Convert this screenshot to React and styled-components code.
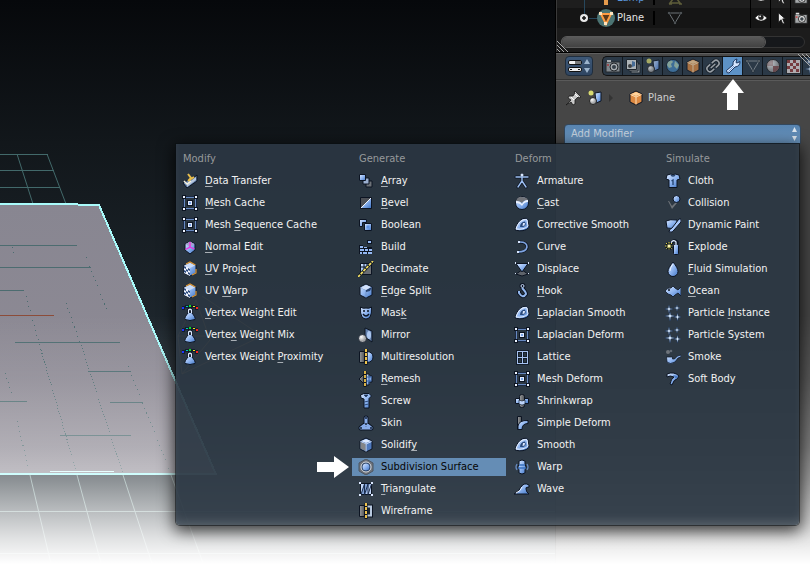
import React from 'react';
import styled, { createGlobalStyle, css } from 'styled-components';

const GlobalStyle = createGlobalStyle`
  *, *::before, *::after { box-sizing: border-box; }
  html, body { margin: 0; height: 100%; background: #fff; overflow: hidden; }
  body, button { font: 11px/14px "DejaVu Sans Condensed", "DejaVu Sans", sans-serif; }
  button { border: 0; padding: 0; margin: 0; background: none; color: inherit; text-align: left; }
  ul { list-style: none; margin: 0; padding: 0; }
  svg { display: block; flex: none; }
`;

/* ---------- layout ---------- */

const Shell = styled.div`
  position: relative;
  display: grid;
  grid-template-columns: 1fr 255px;
  min-height: 100vh;
  overflow: hidden;
  &::after {
    content: "";
    position: absolute;
    inset: 0;
    z-index: 1;
    pointer-events: none;
    background: linear-gradient(rgba(255,255,255,0) 55%, rgba(255,255,255,.1) 66%, rgba(255,255,255,.3) 78%, rgba(255,255,255,.48) 84%, rgba(255,255,255,.86) 94%, #fff 98.5%);
  }
`;
const Viewport = styled.main`
  overflow: hidden;
  background: linear-gradient(#06080b, #12171b 25%, #1e272e 60%, #2c363d 100%);
`;
const Side = styled.aside`
  display: flex;
  flex-direction: column;
  min-width: 0;
  border-left: 1px solid #000;
  background: #464646;
  color: #e6e6e6;
`;
const Outliner = styled.section`
  position: relative;
  display: flex;
  flex-direction: column;
  justify-content: flex-end;
  height: 52px;
  overflow: hidden;
  padding-bottom: 4px;
  background: #1c1c1c;
  border-left: 1px solid #3a3a3a;
`;
const OutlinerRow = styled.li`
  display: flex;
  align-items: center;
  height: 20px;
  padding-left: 21px;
  background: ${p => (p.$odd ? '#151515' : '#1e1e1e')};
  color: ${p => (p.$linked ? '#5a96dc' : '#e4e4e4')};
`;
const RowName = styled.span`
  width: 38px;
  margin-left: 1px;
  border-right: 2px solid #000;
`;
const RowData = styled.span`
  margin-left: 12px;
  flex: 1;
  opacity: .7;
`;
const Toggle = styled.button`
  display: grid;
  place-items: center;
  width: 20px;
  height: 20px;
  border-left: 1px solid #000;
`;
const ScrollTrack = styled.div`
  height: 12px;
  margin: 8px 5px 0 4px;
  border: 1px solid #333;
  border-radius: 6px;
  background: #16181b;
`;
const ScrollThumb = styled.div`
  width: 84%;
  height: 10px;
  border-radius: 5px;
  background: linear-gradient(#5a5a5a, #424242);
  box-shadow: 0 0 0 1px #5c5c5c;
`;
const Header = styled.header`
  display: flex;
  align-items: center;
  height: 28px;
  padding-left: 9px;
  border-top: 1px solid #000;
  border-bottom: 1px solid #333;
  box-shadow: inset 0 1px #606060, 0 1px #5a5a5a;
  background: #484848;
  position: relative;
  overflow: visible;
`;
const EditorButton = styled.button`
  display: grid;
  place-items: center;
  width: 28px;
  height: 20px;
  margin-right: 9px;
  border: 1px solid #1f2d3d;
  border-radius: 4px;
  background: linear-gradient(#3d5878, #2f4561);
`;
const Tabs = styled.nav`
  display: flex;
  flex: 1;
  min-width: 0;
  border: 1px solid #111;
  border-right: 0;
  border-radius: 5px 0 0 5px;
  background: #2b3947;
`;
const Tab = styled.button`
  position: relative;
  display: grid;
  place-items: center;
  flex: 0 0 20px;
  height: 18px;
  border-right: 1px solid #121920;
  background: ${p => (p.$active ? '#5d92c6' : 'transparent')};
  > svg:first-child { opacity: ${p => (p.$active ? 1 : 0.7)}; }
`;
const UpArrow = styled.svg`
  position: absolute;
  top: 22px;
  left: -1px;
`;
const Grip = styled.svg`
  position: absolute;
  ${p => (p.$corner === 'top' ? css`top: 1px; right: 0;` : css`bottom: 0; left: 0;`)}
`;
const Crumbs = styled.div`
  display: flex;
  align-items: center;
  height: 36px;
  padding-left: 9px;
  color: #cfcfcf;
`;
const CrumbName = styled.span`
  margin-left: 4px;
`;
const Gap = styled.span`
  width: ${p => p.$w}px;
`;
const MenuAnchor = styled.div`
  position: relative;
  margin: 8px 9px 0 8px;
`;
const AddButton = styled.button`
  display: flex;
  align-items: center;
  justify-content: space-between;
  width: 100%;
  height: 20px;
  padding: 0 2px 0 6px;
  border: 1px solid #33485e;
  border-radius: 4px 4px 0 0;
  background: linear-gradient(#5884b0, #6b96c0);
  color: #c6d3df;
`;

/* ---------- menu ---------- */

const Menu = styled.div`
  position: absolute;
  top: 100%;
  right: 2px;
  z-index: 2;
  display: grid;
  grid-template-columns: 176px 156px 151px 140px;
  padding: 6px 0 5px;
  border-radius: 0 0 4px 4px;
  background: rgba(43, 55, 67, .93);
  color: #f2f2f2;
  box-shadow: 0 0 0 1px rgba(10,14,18,.55), 0 4px 16px 2px rgba(0,0,0,.75), inset 0 -8px 12px -6px rgba(255,255,255,.2);
`;
const Column = styled.ul`
  display: flex;
  flex-direction: column;
  gap: 4px;
  padding-right: 2px;
`;
const Heading = styled.li`
  height: 18px;
  padding-left: 7px;
  line-height: 18px;
  color: #96999b;
`;
const Item = styled.button`
  position: relative;
  display: flex;
  align-items: center;
  gap: 7px;
  width: 100%;
  height: 18px;
  padding-left: 6px;
  white-space: nowrap;
  background: ${p => (p.$active ? '#658db5' : 'transparent')};
  color: ${p => (p.$active ? '#050505' : 'inherit')};
`;
const Key = styled.span`
  text-decoration: underline 1px #a9afb5;
  text-underline-offset: 2px;
`;
const SideArrow = styled.svg`
  position: absolute;
  right: 100%;
  top: -2px;
  margin-right: 3px;
`;

/* ---------- icons ---------- */

const O = '#0c1422';
const B = 'url(#blue)';
const G = 'url(#grey)';

const Defs = styled.svg`
  position: absolute;
`;

const cageIcon = (
  <g shapeRendering="crispEdges">
    <path d="M2 2h12v12H2z" fill="none" stroke="#1b2a44" strokeWidth="2" />
    <path d="M2.500 2.500h11v11h-11z" fill="none" stroke="#6688c0" />
    {[[1, 1], [13, 1], [1, 13], [13, 13]].map(([x, y]) => (
      <g key={`${x}-${y}`}><rect x={x - 1} y={y - 1} width="4" height="4" fill={O} /><rect x={x} y={y} width="2" height="2" fill="#eef4ff" /></g>
    ))}
    <rect x="5" y="5" width="6" height="6" fill={O} /><rect x="6" y="6" width="4" height="4" fill="#dfeaff" /><rect x="7" y="7" width="2" height="2" fill="#7aa5e8" />
  </g>
);
const uvIcon = (
  <g>
    <path d="M2 4 8 1l6 3v8l-6 3-6-3z" fill={B} stroke={O} />
    <path d="M2.500 4.500 8 2l5 2.500L8 7z" fill="#c9dcfa" />
    <path d="M2 4.500 8 7v8l-6-3z" fill="#f0f4fd" />
    <path d="M2 5l2 1v2L2 7zM4 8l2 1v2l-2-1zM6 7l2 1v2L6 9zM2 9l2 1v2l-2-1zM6 11l2 1v2l-2-1z" fill="#2b4a7e" />
    <path d="M4 3l4-2 5.500 3M10 14l4-2V8" stroke="#e09a38" strokeWidth="1.200" fill="none" />
  </g>
);
const weightIcon = (
  <g>
    <g shapeRendering="crispEdges">
      <path d="M0 1h3V0h10v1h3v4h-3V3H3v2H0z" fill={O} opacity=".7" />
      <rect x="0" y="2" width="2" height="2" fill="#1f35ff" /><rect x="4" y="1" width="2" height="1" fill="#00c5c8" /><rect x="7" y="0" width="2" height="2" fill="#0cdf25" /><rect x="11" y="1" width="2" height="1" fill="#f0e221" /><rect x="14" y="2" width="2" height="2" fill="#f8251d" />
    </g>
    <path d="M6.500 8V5q1.500-2 3 0v3" fill="none" stroke={O} strokeWidth="3" />
    <path d="M6.500 7.500h3q4.500 5 3.500 7-5 2-10 0-1-2 3.500-7z" fill={B} stroke={O} />
    <path d="M6.500 8V5q1.500-1.500 3 0v3" fill="none" stroke="#dbe7fb" strokeWidth="1.200" />
  </g>
);
const smoothIcon = (
  <g>
    <path d="M1 13Q3 4 9 1.500q4-1 5 1l1 8Q10 15.500 1 13z" fill={B} stroke={O} />
    <path d="M2 12q2-7 7-9 3-1 4 0l1 6q-4 4-12 3z" fill="none" stroke="#eaf2ff" />
    <path d="M6 10Q6 5 11 4.500 13 9 9 10z" fill="#2a4a7c" /><path d="M9 6l2 0-.5 2.500-2 .5z" fill="#dce8ff" />
  </g>
);
const sparkIcon = (
  <g stroke="#17305a" strokeWidth=".5">
    <path d="M4 0l.8 3.200L8 4l-3.200.8L4 8l-.8-3.200L0 4l3.200-.8zM12 0l.7 2.300L15 3l-2.300.7L12 6l-.7-2.300L9 3l2.300-.7zM5 7l.9 3.100L10 11l-4.100.9L5 16l-.9-4.100L0 11l4.100-.9zM12.500 8l.8 3.200 2.700.8-2.700.8-.8 3.200-.8-3.200L9 12l2.700-.8z" fill="#dceeff" />
  </g>
);
const cube = (fill, lines) => (
  <g><path d="M2 4 8 1l6 3v8l-6 3-6-3z" fill={fill} stroke={O} /><path d="M2.500 4.500 8 7l5.500-2.500M8 7v7.500" fill="none" stroke={lines} /></g>
);

const icons = {
  transfer: <g><path d="M1 10 5 15 15 8V2l-5 4-4 1z" fill="#6785ae" stroke={O} /><path d="M5 14l9-7V4l-9 7z" fill="#b7c8e0" /><path d="M2 8l3 3 4-3" fill="none" stroke="#f6f2df" strokeWidth="1.500" /><path d="M6 1l3 4-3 3M6 8 12 4" fill="none" stroke="#e7bd4c" strokeWidth="2" /></g>,
  cage: cageIcon,
  normal: <g><path d="M3 5 8 2l5 3v6l-5 4-5-4z" fill={B} stroke={O} /><path d="M3.500 5 8 2.500 12.500 5 8 8z" fill="#a79fd0" /><path d="M8 3v5l-4.500 2.500M8 8l4.500 2" fill="none" stroke="#f02de0" strokeWidth="1.300" /></g>,
  uv: uvIcon,
  weight: weightIcon,
  array: <g stroke={O}><path d="M8 8h6v6H8z" fill="#6d7278" /><path d="M5 5h6v6H5z" fill="#9bb0d0" /><path d="M1.500 1.500h6v6h-6z" fill={B} /></g>,
  bevel: <g><path d="M2.500 2.500h11v11h-11z" fill="#4c4f55" stroke={O} /><path d="M3 13 13 3v10z" fill={B} /><path d="M3 13 13 3" stroke="#eef5ff" /></g>,
  boolean: <g stroke={O}><path d="M1.500 2.500h7v3h-4v4h-3z" fill={B} /><path d="M6.500 6.500h7v7h-7z" fill={B} /><path d="M8.500 8.500h3v3h-3z" fill="#5f92df" stroke="none" /></g>,
  build: <g shapeRendering="crispEdges"><path d="M1 6h4v2h9v7H1zM9 1h5v4H9z" fill={O} /><path d="M10 2h3v2h-3zM2 7h3v2H2zM2 10h4v2H2zM7 10h3v2H7zM11 10h3v2h-3zM6 8h3v1H6zM2 13h2v2H2zM5 13h4v2H5zM10 13h4v2h-4z" fill="#94b8f2" /></g>,
  decimate: <g><path d="M2.500 2.500h11v11h-11z" fill="#6a6e74" stroke={O} /><path d="M3 3h9L3 13z" fill={B} /><path d="M6 3v8M3 6h8M9 3v4" stroke={O} /><path d="M0 16 15 0" stroke={O} strokeWidth="3" /><path d="M0 16 15 0" stroke="#f0dc62" strokeWidth="1.800" strokeDasharray="3 1" /></g>,
  edge: <g>{cube(B, '#7094cc')}<path d="M8 7l6-3-2 4-4 1z" fill="#27426e" /><path d="M3 5l5-3 5 2-5 3z" fill="#d2e1fb" /></g>,
  mask: <g><path d="M2.500 2q2.500 2 5.500 1 3 1 5.500-1 .5 7-1.500 10-4 4-8 0-2-3-1.500-10z" fill={B} stroke={O} /><path d="M5 6h2M9 6h2" stroke={O} strokeWidth="1.500" /><path d="M5 9q3 4 6 0" stroke={O} fill="none" strokeWidth="1.300" /></g>,
  mirror: <g><path d="M7 1l7 3v11l-7-5z" fill="#6380ac" stroke={O} /><ellipse cx="11" cy="8" rx="2" ry="4" fill="#adc8f0" /><circle cx="4.500" cy="11.500" r="4" fill="url(#white)" stroke={O} strokeWidth=".7" /></g>,
  multires: <g><path d="M1.500 2.500h5v11h-5z" fill={G} stroke={O} /><path d="M9 2.500Q15 3 15 8t-6 5.500z" fill={B} stroke={O} /><path d="M8 0v16" stroke={O} strokeWidth="3" /><path d="M8 0v16" stroke="#eec34c" strokeWidth="2" strokeDasharray="3 1" /></g>,
  remesh: <g><path d="M1 8l5-5v10z" fill={G} stroke={O} /><path d="M8 3h3v2h3v6h-3v3H8z" fill={B} stroke={O} /><path d="M8 6h6M8 10h5M11 4v9" stroke="#345f9e" /><path d="M7 0v16" stroke={O} strokeWidth="3" /><path d="M7 0v16" stroke="#eec34c" strokeWidth="1.800" strokeDasharray="3 1" /></g>,
  screw: <g><path d="M2.500 2 6 .5h5L13.500 3 11 5.500V15H6V6L3 5z" fill={B} stroke={O} /><path d="M6 2h4L8 4zM6 9l5-1M6 12l5-1" stroke="#304d7b" fill={O} /></g>,
  skin: <g fill="none" strokeLinecap="round"><path d="M8 3v6l-5 4M8 9l5 4M3 13h10" stroke={O} strokeWidth="5" /><path d="M8 3v6l-5 4M8 9l5 4M3 13h10" stroke="#87aceb" strokeWidth="3" /><g fill="#14233b"><circle cx="8" cy="3" r="1" /><circle cx="8" cy="9" r="1" /><circle cx="3" cy="13" r="1" /><circle cx="13" cy="13" r="1" /></g></g>,
  solidify: <g>{cube('#4e79bd', '#cfdff8')}<path d="M2.500 5 7.500 7v7l-5-2.500z" fill="#838588" /><path d="M3 4l5-2 5 2-5 2z" fill="#dce9ff" /></g>,
  subsurf: <g><path d="M8 0 15 4v8l-7 4-7-4V4z" fill="#70747b" stroke="#4b5663" /><circle cx="8" cy="8" r="5" fill="#1b3458" stroke="#e0e4e7" /><circle cx="8" cy="8" r="3.500" fill={B} /></g>,
  triangulate: <g><path d="M2.500 2.500h11v11h-11z" fill="#7e9ed2" stroke={O} /><path d="M3 13V3h3zM8 13l4-10h1v10z" fill="#c3d7f8" /><path d="M3 13.500 6.500 3v10.500L10 3v10.500L13.500 3" fill="none" stroke="#1c2f50" /><path d="M1 2h2M13 2h2M1 14h2M13 14h2" stroke="#dce8ff" strokeWidth="2" /></g>,
  wireframe: <g><path d="M1.500 2.500h5v11h-5z" fill={G} stroke={O} /><path d="M8 3.500h5v9H8" fill="#17202b" stroke={O} strokeWidth="4" /><path d="M8 3.500h5v9H8" fill="#1b2530" stroke="#b8c9df" strokeWidth="2" /><path d="M8 0v16" stroke={O} strokeWidth="3" /><path d="M8 0v16" stroke="#eec34c" strokeWidth="2" strokeDasharray="3 1" /></g>,
  armature: <g fill="none" strokeLinecap="round"><path d="M2 4h12M8 2v6l-4 6M8 8l4 6" stroke={O} strokeWidth="3" /><path d="M2 4h12M8 4v4l-4 6M8 8l4 6" stroke="#9cbff2" strokeWidth="1.400" /><circle cx="8" cy="2" r="1.500" fill="#d8e7ff" /></g>,
  cast: <g><circle cx="8" cy="8" r="6.500" fill={B} stroke={O} /><path d="M2 6Q4 1 8 2q5 0 6 3-4 0-6 3-2-2-6-2z" fill="#707379" /><path d="M2 6q4 0 6 3 2-4 6-4v2q-4 0-6 4-2-3-6-3z" fill="#eaf2ff" /></g>,
  smooth: smoothIcon,
  curve: <g fill="none"><path d="M5 3q9 0 8 6-1 4-9 4" stroke={O} strokeWidth="3" /><path d="M6 3q7 0 7 5-1 5-9 5" stroke="#7fa5e2" strokeWidth="1.600" /><path d="M4 2h2v2H4zM3 12h2v2H3z" fill="#d8e6ff" /></g>,
  displace: <g><path d="M2 13 8 9l6 4-6 2z" fill="#5f646b" stroke={O} /><path d="M2 2.500h12L8 11z" fill={B} stroke={O} /><path d="M1 1h1v2H1zM14 1h1v2h-1zM1 12h1v1H1zM14 12h1v1h-1z" fill="#d6e3fa" /></g>,
  hook: <g fill="none"><circle cx="8.500" cy="3" r="1.500" stroke={O} strokeWidth="3" /><path d="M8 5q4 4 4 6-3 5-7-1V8" stroke={O} strokeWidth="4" /><circle cx="8.500" cy="3" r="1.500" stroke="#c8daf8" /><path d="M8 5q4 4 4 6-3 5-7-1V8" stroke="#93b7ee" strokeWidth="2" /></g>,
  lattice: <g shapeRendering="crispEdges" fill="none"><path d="M3.500 2.500h10v12h-10zM8.500 2v12M3 8.500h10" stroke={O} strokeWidth="3" opacity=".7" /><path d="M3.500 2.500h10v12h-10zM8.500 2v12M3 8.500h10" stroke="#a6c2f0" /></g>,
  shrink: <g><path d="M1.500 5.500h4v5h-4zM10.500 5.500h4v5h-4z" fill={B} stroke={O} /><rect x="5.500" y="1.500" width="5" height="13" rx="2" fill={G} stroke={O} /><path d="M5 7q3 2 6 0v4q-3 2-6 0z" fill="#bdd4fa" stroke={O} strokeWidth=".6" /></g>,
  bend: <g><path d="M3.500 1.500h4v13h-4z" fill={G} stroke={O} /><path d="M4 14.500V11q1-6 10-5.500v3q-6 0-6 6z" fill={B} stroke={O} /></g>,
  warp: <g><path d="M3 5q-2 3 0 6M13 5q2 3 0 6" fill="none" stroke="#6689bd" strokeWidth="1.300" /><path d="M5 2q3-2 6 0v3q2 3 0 6v3q-3 2-6 0v-3q-2-3 0-6z" fill={B} stroke={O} /><path d="M5 6h6M4 9h8" stroke="#3970bd" strokeWidth="1.500" /></g>,
  wave: <g><path d="M0 13Q5 11 7 6q3-5 8-2v2q-4 0-3 2 0 3 3 5z" fill={B} stroke={O} /><path d="M2 12q5-2 6-6" stroke="#f0f5ff" fill="none" /></g>,
  cloth: <g><path d="M2 2l4-1q2 2 4 0l4 1 1 4-3 1v7.500H4V7L1 6z" fill={B} stroke={O} /><path d="M6 2q2 2 4 0" stroke="#28456f" fill="none" strokeWidth="1.500" /><path d="M6.500 8 8 7v5" stroke="#24436f" strokeWidth="1.300" fill="none" /></g>,
  collision: <g><path d="M3 6l4 8 5-6-1-1-4 4-3-5z" fill="#6e7278" /><circle cx="11.500" cy="4" r="3.500" fill={B} stroke={O} /></g>,
  paint: <g><path d="M1 4q4-2 11-1v6q-5 4-10 2z" fill={B} stroke={O} /><path d="M4 15q0-3 3-4l7-9h2v3l-7 8q-1 3-5 2z" fill="#a9c8fb" stroke={O} /></g>,
  explode: <g><path d="M6 5q2-5 6-2v3" stroke={O} strokeWidth="3" fill="none" /><rect x="8.500" y="5.500" width="5" height="10" rx="1" fill={B} stroke={O} /><path d="M6 4q2-4 5-1v3" stroke="#dce8fc" strokeWidth="1.300" fill="none" /><circle cx="4" cy="7" r="3.800" fill={O} /><path d="M4 3v8M0 7h8M1 4l6 6M7 4l-6 6" stroke="#ddd54b" strokeDasharray="1.500 1" /><circle cx="4" cy="7" r="1.500" fill="#fff9b1" /></g>,
  fluid: <g><path d="M8 1q5 6 5 9.500a5 5 0 0 1-10 0Q3 7 8 1z" fill={B} stroke={O} /><path d="M8 3Q5 7 5 10" stroke="#e8f2ff" fill="none" /></g>,
  ocean: <g><path d="M0 8q3-4 6-3l2-2 2 2 3 2 3-3v9l-3-3-3 2-2 2-2-2Q3 12 0 8z" fill={B} stroke={O} strokeWidth=".8" /><circle cx="4" cy="7" r="1" fill={O} /></g>,
  spark: sparkIcon,
  smoke: <g><circle cx="3" cy="3" r="2" fill="#6e747b" /><circle cx="6" cy="2" r="1.300" fill="#616a75" /><path d="M1.500 8h6v2l2 0 3-3 3.500-1v2l-3 1-3 4q-5 3-8 0z" fill={B} stroke={O} strokeWidth=".7" /></g>,
  soft: <g><path d="M2 3q7-3 12 2l-2 3q-3 0-5 6l-2-1q1-5 4-7Q5 4 2 6z" fill={B} stroke={O} /><path d="M8 4l5 1-2 3z" fill="#4a7bc4" /></g>,

  camera: <g><rect x="1" y="4" width="14" height="10" fill="#a5a9ab" stroke="#222" /><rect x="2" y="2" width="4" height="2" fill="#ddd" /><circle cx="9" cy="9" r="4" fill="#ddd" stroke="#222" /><circle cx="9" cy="9" r="2" fill="#3b444b" /><rect x="2" y="6" width="2" height="2" fill="#c55" /></g>,
  layers: <g stroke="#191f24"><path d="M6 6h9v9H6z" fill="#b5b8b9" /><path d="M4 4h9v9H4z" fill="#bbb" /><path d="M1.500 1.500h10v10h-10z" fill="#e5e8e9" /><path d="M7 3l3 1v4l-3 1z" fill="#5483b9" stroke="none" /><circle cx="5" cy="8" r="2" fill="#444" stroke="none" /></g>,
  scene: <g><path d="M8 3l6-1v9l-5 2z" fill={B} stroke={O} /><circle cx="4" cy="3" r="2.500" fill="#d9da70" /><circle cx="6" cy="11" r="3.500" fill="url(#white)" stroke="#222" /></g>,
  world: <g><circle cx="8" cy="8" r="6.500" fill="#4583b9" stroke="#14212d" /><path d="M3 4q4-3 5 0l-2 2 1 3-3 1-2-3zM10 3l4 4-2 4-3-3z" fill="#a9cfbd" /></g>,
  object: <g>{cube('#dc8942', '#ffe0b5')}<path d="M3 4l5-2 5 2-5 2z" fill="#ffd39c" /></g>,
  link: <g fill="none" transform="rotate(-42 8 8)"><path d="M7 5H4a3 3 0 0 0 0 6h3M9 5h3a3 3 0 0 1 0 6H9M5 8h6" stroke="#11181f" strokeWidth="3.500" /><path d="M7 5H4a3 3 0 0 0 0 6h3M9 5h3a3 3 0 0 1 0 6H9M5 8h6" stroke="#c6c9cc" strokeWidth="1.600" /></g>,
  wrench: <g><path d="M1.500 12.500 8 7Q7.500 2 12 1l-1 3.500L12 5l3-1.500Q15 8.500 10 9l-6 6Q1.500 15.500 1.500 12.500z" fill="#d5e6ff" stroke="#1b355e" /><path d="M3.500 13.500 9 8" stroke="#6b97d4" /></g>,
  mesh: <g><path d="M2 3h12L8 13z" fill="none" stroke="#939ba1" /><path d="M1 2h2v2H1zM13 2h2v2h-2zM7 12h2v2H7z" fill="#c3c8cb" stroke="#20282f" strokeWidth=".7" /></g>,
  material: <g><circle cx="8" cy="8" r="6.500" fill="url(#white)" stroke="#202020" /><path d="M8 2a6 6 0 0 0-6 6h6z" fill="#894d4d" opacity=".4" /><path d="M8 8h6q-1 6-6 6z" fill="#7e3d3d" opacity=".8" /></g>,
  texture: <g shapeRendering="crispEdges"><path d="M1 1h14v14H1z" fill="#e8dddd" stroke="#252525" /><path d="M2 2h3v3H2zM8 2h3v3H8zM5 5h3v3H5zM11 5h3v3h-3zM2 8h3v3H2zM8 8h3v3H8zM5 11h3v3H5zM11 11h3v3h-3z" fill="#963c3c" /></g>,
  particles: sparkIcon,
  pin: <g><path d="M1 15l5-5-3-2 1-2 4 0 2-3-1-1 1-1 6 6-1 1-2-1-3 3 0 4-2 1-2-3z" fill="#c7c7c7" stroke="#181818" strokeWidth=".8" /><path d="M6 7l3 3M10 4l3 3" stroke="#fff" /></g>,
  eye: <g><path d="M1 8q6-8 14 0-7 7-14 0z" fill="#fff" stroke="#111" strokeWidth=".6" /><circle cx="8" cy="7" r="3" fill="#202020" /><circle cx="7" cy="6" r="1" fill="#fff" /></g>,
  cursor: <path d="M5 2v11l3-3 2 5 2-1-2-5h3z" fill="#eee" stroke="#111" />,
};

const Icon = ({ name, size = 16 }) => (
  <svg width={size} height={size} viewBox="0 0 16 16" aria-hidden="true">{icons[name]}</svg>
);

/* ---------- data: icon, label, index of the access key ---------- */

const columns = [
  ['Modify', [
    ['transfer', 'Data Transfer', 0], ['cage', 'Mesh Cache', 0], ['cage', 'Mesh Sequence Cache', 5],
    ['normal', 'Normal Edit', 0], ['uv', 'UV Project', 0], ['uv', 'UV Warp', 3],
    ['weight', 'Vertex Weight Edit', 0], ['weight', 'Vertex Weight Mix', 5], ['weight', 'Vertex Weight Proximity', 14],
  ]],
  ['Generate', [
    ['array', 'Array', 0], ['bevel', 'Bevel', 0], ['boolean', 'Boolean'], ['build', 'Build'], ['decimate', 'Decimate'],
    ['edge', 'Edge Split', 0], ['mask', 'Mask', 3], ['mirror', 'Mirror'], ['multires', 'Multiresolution'],
    ['remesh', 'Remesh', 0], ['screw', 'Screw'], ['skin', 'Skin'], ['solidify', 'Solidify', 7],
    ['subsurf', 'Subdivision Surface'], ['triangulate', 'Triangulate', 0], ['wireframe', 'Wireframe'],
  ]],
  ['Deform', [
    ['armature', 'Armature'], ['cast', 'Cast', 0], ['smooth', 'Corrective Smooth'], ['curve', 'Curve'],
    ['displace', 'Displace'], ['hook', 'Hook', 0], ['smooth', 'Laplacian Smooth', 0], ['cage', 'Laplacian Deform'],
    ['lattice', 'Lattice'], ['cage', 'Mesh Deform'], ['shrink', 'Shrinkwrap'], ['bend', 'Simple Deform'],
    ['smooth', 'Smooth'], ['warp', 'Warp'], ['wave', 'Wave'],
  ]],
  ['Simulate', [
    ['cloth', 'Cloth'], ['collision', 'Collision'], ['paint', 'Dynamic Paint'], ['explode', 'Explode'],
    ['fluid', 'Fluid Simulation', 0], ['ocean', 'Ocean', 0], ['spark', 'Particle Instance', 9],
    ['spark', 'Particle System'], ['smoke', 'Smoke'], ['soft', 'Soft Body'],
  ]],
];
const tabs = [
  ['camera', 'Render'], ['layers', 'Render layers'], ['scene', 'Scene'], ['world', 'World'], ['object', 'Object'],
  ['link', 'Constraints'], ['wrench', 'Modifiers'], ['mesh', 'Data'], ['material', 'Material'], ['texture', 'Texture'], ['particles', 'Particles'],
];

const Label = ({ text, at }) =>
  at === undefined ? <span>{text}</span> : <span>{text.slice(0, at)}<Key>{text[at]}</Key>{text.slice(at + 1)}</span>;

const Scene = () => (
  <svg width="556" height="573" viewBox="0 0 556 573" aria-label="3D view">
    <g stroke="#42696a" fill="none">
      <path d="M0 154.500h48M0 170.500h54M0 187.500h60M17 154l16 50M47 154l19 50" />
    </g>
    <path d="M0 204h56l43 1 117 269H0z" fill="url(#plane)" />
    <g stroke="#4c6c70" fill="none" shapeRendering="crispEdges">
      <path d="M0 245.500h77M0 267.500h91M0 290.500h24M15 342.500h105M88 371.500h43M110 402.500h33M0 401.500h27M60 435.500h71" />
      <path strokeDasharray="1 4" d="M12 247l3 10M86 257l5 13 17 42M26 296l15 54M66 303l16 45M5 373l7 22M17 421l13 53M128 366l43 108" />
      <path strokeDasharray="1 2" d="M41 350l36 124M82 348l41 126" />
    </g>
    <path d="M0 315.500h54" stroke="#8c4c39" />
    <path d="M50 471.500h64" stroke="#d6ffff" />
    <path d="M0 473.500 216 474.500 99 205 56 204 0 204" fill="none" stroke="#a9fbfb" strokeWidth="2" shapeRendering="crispEdges" />
    <g stroke="#7d9a99" fill="none"><path d="M30 475l26 110M77 475l30 110M123 475l36 110M171 475l40 110M0 511.500h556M0 553.500h556" /></g>
    <path d="M178 336l18-36 14 40-28 34zM178 336h84l-60-40M262 336l-80 38" fill="none" stroke="#c98a4a" opacity=".7" />
  </svg>
);

const Stepper = () => (
  <svg width="7" height="14" viewBox="0 0 7 14" aria-hidden="true"><path d="M3.500 0 6 5H1zM3.500 14 6 9H1z" fill="#dbe5ee" /></svg>
);

const RowToggles = () => (
  <>
    <Toggle aria-label="Visible"><Icon name="eye" size={14} /></Toggle>
    <Toggle aria-label="Selectable"><Icon name="cursor" size={14} /></Toggle>
    <Toggle aria-label="Renderable"><Icon name="camera" size={14} /></Toggle>
  </>
);

export default function App() {
  return (
    <Shell>
      <GlobalStyle />
      <Defs width="0" height="0" aria-hidden="true">
        <defs>
          <linearGradient id="blue" x1="0" y1="0" x2="1" y2="1"><stop stopColor="#dbe9ff" /><stop offset=".5" stopColor="#8fb5f0" /><stop offset="1" stopColor="#3f74c4" /></linearGradient>
          <linearGradient id="grey"><stop stopColor="#9a9c9e" /><stop offset="1" stopColor="#505357" /></linearGradient>
          <radialGradient id="white" cx=".35" cy=".3"><stop stopColor="#fff" /><stop offset="1" stopColor="#a4a6a8" /></radialGradient>
          <linearGradient id="plane" x1="0" y1="0" x2="0" y2="1"><stop stopColor="#888691" /><stop offset="1" stopColor="#908c96" /></linearGradient>
        </defs>
      </Defs>
      <Viewport><Scene /></Viewport>
      <Side>
        <Outliner aria-label="Outliner">
          <ul>
            <OutlinerRow $linked>
              <svg width="38" height="20" viewBox="0 0 38 20" aria-hidden="true"><path d="M6.500 0v20" stroke="#27475c" /><path d="M25 4h6l1 4-2 3v6h-4v-6l-2-3z" fill="#e59a4c" /></svg>
              <RowName>Lamp</RowName>
              <RowData><svg width="16" height="16" viewBox="0 0 16 16" aria-hidden="true"><path d="M3 13l3-4h4l3 4zM2 14h3M12 14h3" fill="none" stroke="#7a7946" strokeWidth="1.500" /></svg></RowData>
              <RowToggles />
            </OutlinerRow>
            <OutlinerRow $odd>
              <svg width="38" height="20" viewBox="0 0 38 20" aria-hidden="true">
                <path d="M6.500 0v7M11 10.500h9" stroke="#27475c" />
                <circle cx="6" cy="10" r="4" fill="#e8e8e8" /><path d="M6 8v4M4 10h4" stroke="#111" strokeWidth="1.500" />
                <circle cx="28" cy="10" r="9" fill="#4b7372" />
                <path d="M23 6h10l-5 10z" fill="#5b3a1a" stroke="#ff9c42" strokeWidth="2" />
                <path d="M21 4h3v3h-3zM32 4h3v3h-3zM26 14h3v3h-3z" fill="#ffe4bd" />
              </svg>
              <RowName>Plane</RowName>
              <RowData><Icon name="mesh" /></RowData>
              <RowToggles />
            </OutlinerRow>
          </ul>
          <ScrollTrack><ScrollThumb /></ScrollTrack>
          <Grip $corner="bottom" width="11" height="11" viewBox="0 0 11 11" aria-hidden="true"><path d="M0 0l11 11M0 4l7 7M0 8l3 3" stroke="#aaa" /></Grip>
        </Outliner>
        <Header>
          <EditorButton aria-label="Editor type">
            <svg width="24" height="16" viewBox="0 0 24 16" aria-hidden="true">
              <rect x="1.500" y="2.500" width="13" height="4" rx="1.500" fill="#eee" stroke="#111" /><path d="M8 3h6v3H8z" fill="#777" />
              <rect x="1.500" y="9.500" width="13" height="4" rx="1.500" fill="#eee" stroke="#111" /><path d="M3 11.500h2M11 11.500h2" stroke="#111" />
              <path d="M20 1l3 5h-6zM20 15l3-5h-6z" fill="#9db4cc" />
            </svg>
          </EditorButton>
          <Tabs aria-label="Properties">
            {tabs.map(([icon, label]) => (
              <Tab key={label} $active={icon === 'wrench'} aria-label={label}>
                <Icon name={icon} />
                {icon === 'wrench' && (
                  <UpArrow width="22" height="31" viewBox="0 0 22 31" aria-hidden="true"><path d="M11 0l11 14h-6v17H5V14H0z" fill="#fff" /></UpArrow>
                )}
              </Tab>
            ))}
          </Tabs>
          <Grip $corner="top" width="13" height="13" viewBox="0 0 13 13" aria-hidden="true"><path d="M1 0l12 12M5 0l8 8M9 0l4 4" stroke="#aaa" /></Grip>
        </Header>
        <Crumbs>
          <Icon name="pin" /><Gap $w={6} /><Icon name="scene" /><Gap $w={5} />
          <svg width="6" height="8" viewBox="0 0 6 8" aria-hidden="true"><path d="M1 0l4 4-4 4z" fill="#333" /></svg>
          <Gap $w={14} /><Icon name="object" /><CrumbName>Plane</CrumbName>
        </Crumbs>
        <MenuAnchor>
          <AddButton aria-expanded="true"><span>Add Modifier</span><Stepper /></AddButton>
          <Menu>
            {columns.map(([title, items]) => (
              <Column key={title}>
                <Heading>{title}</Heading>
                {items.map(([icon, text, at]) => (
                  <li key={text}>
                    <Item $active={icon === 'subsurf'}>
                      {icon === 'subsurf' && (
                        <SideArrow width="32" height="22" viewBox="0 0 32 22" aria-hidden="true"><path d="M0 6h17V0l15 11-15 11v-6H0z" fill="#fff" /></SideArrow>
                      )}
                      <Icon name={icon} />
                      <Label text={text} at={at} />
                    </Item>
                  </li>
                ))}
              </Column>
            ))}
          </Menu>
        </MenuAnchor>
      </Side>
    </Shell>
  );
}
